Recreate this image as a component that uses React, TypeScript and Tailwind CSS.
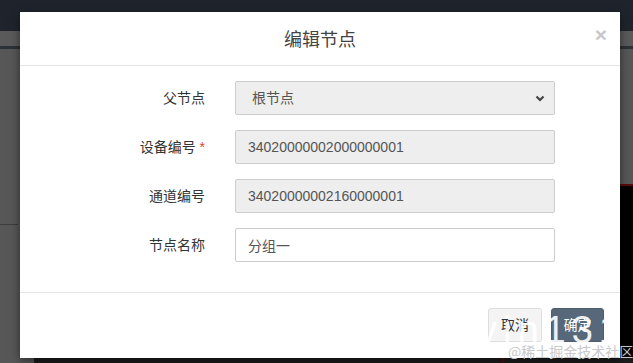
import React from 'react';

const SANS = { fontFamily: '"Liberation Sans", "Noto Sans CJK SC", sans-serif' };

interface FieldRowProps {
  label: string;
  required?: boolean;
  children: React.ReactNode;
}

function FieldRow({ label, required, children }: FieldRowProps) {
  return (
    <div className="flex h-[34px] items-center">
      <label className="w-[215px] pr-[30px] text-right text-[14px] text-[#333]">
        {label}
        {required && <span className="text-[#e0452f]"> *</span>}
      </label>
      <div className="w-[320px]">{children}</div>
    </div>
  );
}

function TextBox({ value, disabled }: { value: string; disabled?: boolean }) {
  return (
    <input
      readOnly
      value={value}
      className={`block h-[34px] w-full rounded-[2px] border border-[#ccc] px-3 text-[14px] text-[#555] outline-none ${
        disabled ? 'bg-[#eee]' : 'bg-white'
      }`}
      style={SANS}
    />
  );
}

export default function App() {
  return (
    <div className="relative h-[363px] w-[633px] overflow-hidden" style={SANS}>
      {/* page behind the overlay */}
      <div className="flex h-full flex-col">
        <div className="h-[31px] bg-[#1f242c]" />
        <div className="h-[15px] bg-[#5a5a5a]" />
        <div className="h-[3px] bg-[#2c3137]" />
        <div className="h-[135px] bg-[#575757]" />
        <div className="flex h-[174px]">
          <div className="w-[320px] bg-[#575757] pt-[40px]">
            <div className="h-[1px] w-[18px] bg-[#3c3c3c]" />
          </div>
          <div className="flex-1 border-t-2 border-[#5a0a0a] bg-black" />
        </div>
        <div className="flex h-[5px]">
          <div className="w-[34px] bg-[#575757]" />
          <div className="flex flex-1 bg-[#1c1c1c] pl-[468px]">
            <div className="h-full w-[2px] bg-[#5a0a0a]" />
          </div>
        </div>
      </div>

      {/* dialog */}
      <div
        role="dialog"
        className="absolute left-[20px] top-[12px] flex h-[346px] w-[600px] flex-col bg-white shadow-[0_3px_9px_rgba(0,0,0,0.5)]"
      >
        <div className="relative flex h-[54px] items-center justify-center border-b border-[#e5e5e5]">
          <h4 className="text-[18px] text-[#444]" style={{ fontFamily: '"Noto Sans CJK SC", sans-serif' }}>
            编辑节点
          </h4>
          <button className="absolute right-[13px] top-[12px] text-[21px] font-bold leading-none text-[#c8c8c8]">
            ×
          </button>
        </div>

        <div className="flex flex-col gap-[15px] pb-[30px] pt-[15px]">
          <FieldRow label="父节点">
            <div className="flex h-[34px] w-full items-center justify-between rounded-[2px] border border-[#ccc] bg-[#eee] pl-[16px] pr-[9px] text-[14px] text-[#555]">
              <span>根节点</span>
              <svg width="10" height="7" viewBox="0 0 10 7">
                <path d="M1.5 1.5 L5 5 L8.5 1.5" fill="none" stroke="#444" strokeWidth="2.2" />
              </svg>
            </div>
          </FieldRow>
          <FieldRow label="设备编号" required>
            <TextBox value="34020000002000000001" disabled />
          </FieldRow>
          <FieldRow label="通道编号">
            <TextBox value="34020000002160000001" disabled />
          </FieldRow>
          <FieldRow label="节点名称">
            <TextBox value="分组一" />
          </FieldRow>
        </div>

        <div className="flex justify-end gap-[9px] border-t border-[#e5e5e5] px-[16px] py-[15px]">
          <button className="h-[34px] w-[54px] rounded-[3px] border border-[#ddd] bg-[#f4f4f4] text-[14px] text-[#333]">
            取消
          </button>
          <button className="h-[34px] w-[53px] rounded-[3px] border border-[#4d5e6f] bg-[#56687a] text-[14px] text-white">
            确定
          </button>
        </div>
      </div>

      {/* watermark */}
      <div className="pointer-events-none absolute left-[478px] top-[311px] whitespace-nowrap text-[38px] leading-none tracking-[6px] text-white/90">
        vin131
      </div>
      <div
        className="pointer-events-none absolute left-[508px] top-[344px] whitespace-nowrap text-[14px] leading-none text-[#c9c9c9]"
        style={{ fontFamily: '"Noto Sans CJK SC", serif' }}
      >
        @稀土掘金技术社区
      </div>
    </div>
  );
}
